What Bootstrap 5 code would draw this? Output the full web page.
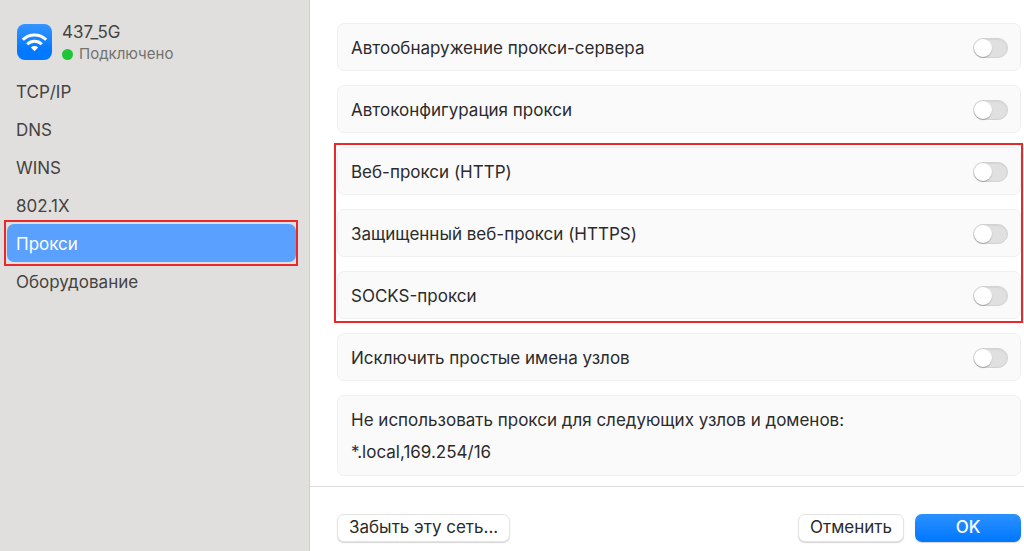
<!DOCTYPE html>
<html lang="ru">
<head>
<meta charset="utf-8">
<meta name="viewport" content="width=device-width, initial-scale=1">
<title>Прокси — 437_5G</title>
<link href="https://cdn.jsdelivr.net/npm/bootstrap@5.3.0/dist/css/bootstrap.min.css" rel="stylesheet">
<style>
  body { font-family: Inter, "Liberation Sans", sans-serif; font-size: 17px; line-height: 24px; color: #2b2b2b; background: #fff; }
  .sidebar { width: 310px; background: #e0dfdd; border-right: 1px solid #cfcecc; color: #454443; padding: 22px 13px 16px 7px; }
  .network { padding-left: 9px; gap: 10px; height: 50px; }
  .network-name { line-height: 20px; }
  .network-status { font-size: 15px; line-height: 24px; color: #73726f; gap: 6px; }
  .status-dot { width: 11px; height: 11px; background: #1fc437; }
  .section-link { padding: 8px 9px 6px; color: inherit; border-radius: 7px; }
  .section-link:hover { color: inherit; }
  .section-link.active, .section-link.active:hover { background: #5aa1ff; color: #fff; }
  .marked { position: relative; }
  .marked::after { content: ""; position: absolute; inset: -4px -2px -4px -3px; border: 2px solid #e8282b; pointer-events: none; }
  .settings { padding: 23px 3px 10px 27px; gap: 14px; }
  .settings-group { gap: 14px; }
  .setting { background: #fafafa; border: 1px solid #f0f0f0; border-radius: 7px; padding: 12px 12px 10px 13px; }
  .setting .form-check-input { width: 35px; height: 20px; margin: 0; border: 1px solid #d2d2d2; background-color: #e0e0e0; position: relative; background-image: none; box-shadow: inset 0 1px 1px #0000000d; }
  .setting .form-check-input::before { content: ""; position: absolute; top: 0; left: 0; width: 18px; height: 18px; border-radius: 50%; background: #fff; box-shadow: 0 1px 1px #00000040; }
  .setting .form-check-input:checked { background-color: #0a7aff; border-color: #0a7aff; }
  .setting .form-check-input:checked::before { left: auto; right: 0; }
  .setting .form-control-plaintext { color: inherit; padding: 0; margin-top: 7px; line-height: 24px; outline: 0; }
  .actions { border-top: 1px solid #dedede; padding: 27px 3px 9px 27px; gap: 11px; }
  .action { --bs-btn-font-size: 17px; --bs-btn-line-height: 24px; --bs-btn-padding-x: 11px; --bs-btn-padding-y: 1px; --bs-btn-border-radius: 7px;
    --bs-btn-color: #2b2b2b; --bs-btn-bg: #fff; --bs-btn-border-color: #e3e3e3; --bs-btn-hover-bg: #f5f5f5; --bs-btn-hover-border-color: #d8d8d8; box-shadow: 0 1px 1px #0000002b; padding: 0 11px 2px; }
  .action-ok { width: 106px; border: 0; padding: 1px 11px 3px; font-weight: 500; --bs-btn-color: #fff; --bs-btn-hover-color: #fff; background: linear-gradient(#2c91ff, #0077ff); }
</style>
</head>
<body>
<div class="d-flex min-vh-100">
  <aside class="sidebar flex-shrink-0">
    <div class="network d-flex">
      <svg class="flex-shrink-0" width="36" height="38" viewBox="0 0 36 38" aria-hidden="true">
        <defs><linearGradient id="tile" x1="0" y1="0" x2="0" y2="1"><stop offset="0" stop-color="#3594ff"/><stop offset=".75" stop-color="#0078ff"/></linearGradient></defs>
        <rect x="1" y="2" width="35" height="36" rx="8" fill="url(#tile)"/>
        <g fill="none" stroke="#fff" stroke-width="3">
          <path d="M6.800 17.800A16.500 16.500 0 0 1 30.200 17.800"/>
          <path d="M11.200 22.200A10.300 10.300 0 0 1 25.800 22.200"/>
        </g>
        <path d="M18.500 29.300L14.900 25.600A5.100 5.100 0 0 1 22.100 25.600Z" fill="#fff"/>
      </svg>
      <div>
        <div class="network-name">437_5G</div>
        <div class="network-status d-flex align-items-center"><span class="status-dot rounded-circle"></span>Подключено</div>
      </div>
    </div>
    <nav class="nav flex-column">
      <a class="nav-link section-link" href="#">TCP/IP</a>
      <a class="nav-link section-link" href="#">DNS</a>
      <a class="nav-link section-link" href="#">WINS</a>
      <a class="nav-link section-link" href="#">802.1X</a>
      <a class="nav-link section-link active marked" href="#" aria-current="page">Прокси</a>
      <a class="nav-link section-link" href="#">Оборудование</a>
    </nav>
  </aside>

  <main class="d-flex flex-column flex-grow-1">
    <div class="settings d-flex flex-column flex-grow-1">
      <div class="setting d-flex align-items-center justify-content-between form-switch">
        <label for="auto-detect">Автообнаружение прокси-сервера</label>
        <input class="form-check-input" type="checkbox" role="switch" id="auto-detect">
      </div>
      <div class="setting d-flex align-items-center justify-content-between form-switch">
        <label for="auto-config">Автоконфигурация прокси</label>
        <input class="form-check-input" type="checkbox" role="switch" id="auto-config">
      </div>
      <div class="settings-group marked d-flex flex-column">
        <div class="setting d-flex align-items-center justify-content-between form-switch">
          <label for="http">Веб-прокси (HTTP)</label>
          <input class="form-check-input" type="checkbox" role="switch" id="http">
        </div>
        <div class="setting d-flex align-items-center justify-content-between form-switch">
          <label for="https">Защищенный веб-прокси (HTTPS)</label>
          <input class="form-check-input" type="checkbox" role="switch" id="https">
        </div>
        <div class="setting d-flex align-items-center justify-content-between form-switch">
          <label for="socks">SOCKS-прокси</label>
          <input class="form-check-input" type="checkbox" role="switch" id="socks">
        </div>
      </div>
      <div class="setting d-flex align-items-center justify-content-between form-switch">
        <label for="simple-names">Исключить простые имена узлов</label>
        <input class="form-check-input" type="checkbox" role="switch" id="simple-names">
      </div>
      <div class="setting d-flex flex-column">
        <label for="bypass">Не использовать прокси для следующих узлов и доменов:</label>
        <input class="form-control-plaintext" type="text" id="bypass" value="*.local,169.254/16">
      </div>
    </div>
    <footer class="actions d-flex">
      <button class="btn action me-auto" type="button">Забыть эту сеть...</button>
      <button class="btn action" type="button">Отменить</button>
      <button class="btn action action-ok" type="button">OK</button>
    </footer>
  </main>
</div>
<script src="https://cdn.jsdelivr.net/npm/bootstrap@5.3.0/dist/js/bootstrap.bundle.min.js"></script>
</body>
</html>
